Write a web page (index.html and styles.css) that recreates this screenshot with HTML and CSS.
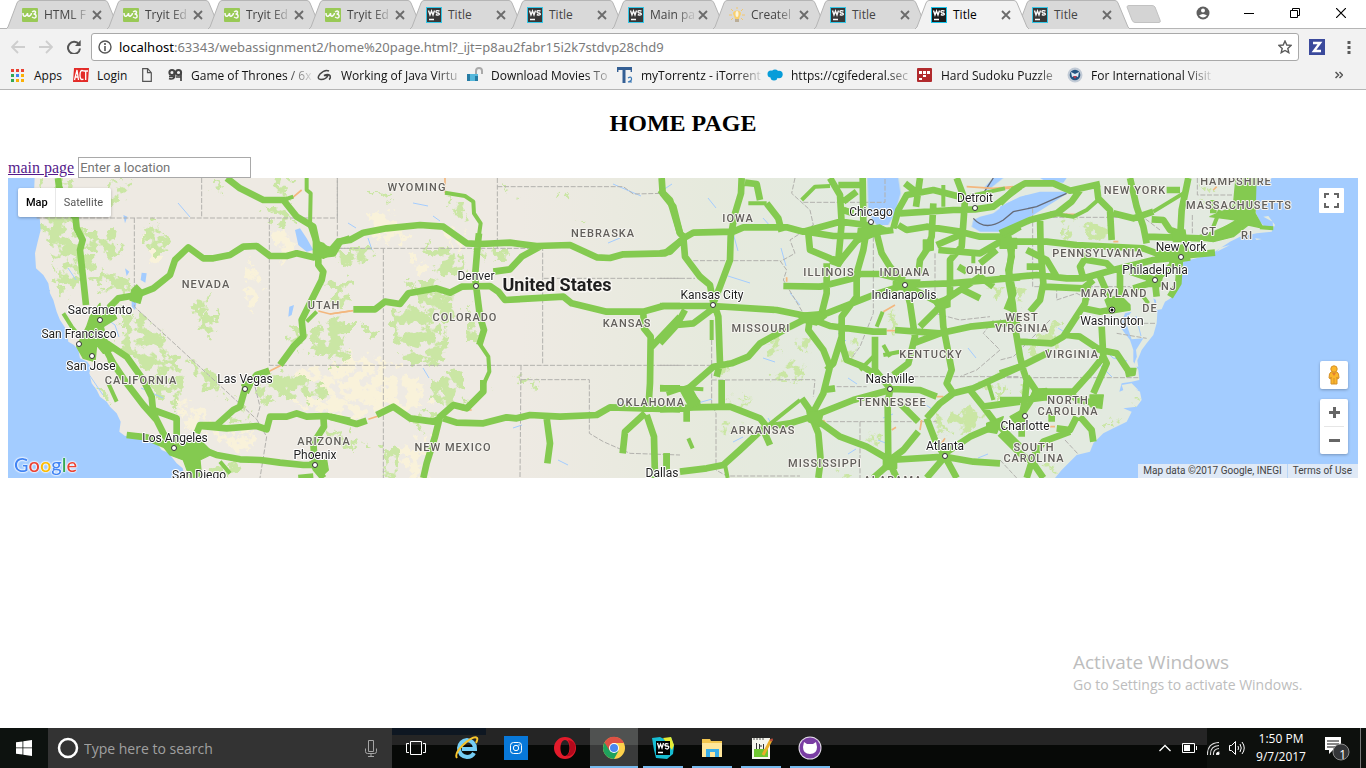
FILE: index.html
```html
<!DOCTYPE html>
<html lang="en">
<head>
<meta charset="utf-8">
<title>Title</title>
<link rel="stylesheet" href="styles.css">
</head>
<body>
<svg class="defs" aria-hidden="true">
  <symbol id="tab" viewBox="0 0 115 29"><path d="M0 29 2 27 11 3Q12 .5 14 .5H99Q101 .5 102 3L112 27 114 29" stroke="#b5b5b5"/></symbol>
  <symbol id="w3" viewBox="0 0 16 16"><rect width="16" height="14" y="1" rx="1" fill="#8fc740"/><path d="M1 6q0 4 2.500 3 2-1 2-3 0 4 2 3 2-1 2-3M10 5q3-2 3.500 0 0 2-2 2 3 0 2.500 3-1 2-4 0" fill="none" stroke="#fff" stroke-width="1.500"/></symbol>
  <symbol id="ws" viewBox="0 0 16 16"><rect width="16" height="16" fill="#18c4ea"/><rect x="1" y="1" width="14" height="14" fill="#1c1c1c"/><path d="M2.500 3.500 4 8l1.500-4L7 8l1.500-4.500M13.500 4Q10 3 10 4.600T12 6q2 1 1 1.800T9.800 7.500M3 12.500h5" fill="none" stroke="#fff" stroke-width="1.400"/></symbol>
  <symbol id="bulb" viewBox="0 0 16 16"><path d="M5 9Q3 6 5 4.500q3-2 6 0 2 2 0 4.500l-1 3H6z" fill="#ffcf5c"/><path d="M6 12h4v3H6z" fill="#b5a68c"/><path d="M8 0v2M2 2l2 2M14 2l-2 2M0 8h3M13 8h3M2 13l2-2M14 13l-2-2" stroke="#f8c55c"/><ellipse cx="8" cy="7" rx="1.500" ry="3" fill="#fff9df"/></symbol>
  <symbol id="x" viewBox="0 0 10 10"><path d="m1 1 8 8M9 1 1 9" stroke="#6b6b6b" stroke-width="1.800"/></symbol>
</svg>

<header class="browser">
  <div class="tabstrip">
    <div class="tabs">
      <div class="tab"><svg class="shape"><use href="#tab"/></svg><svg class="ico"><use href="#w3"/></svg><button class="name fade">HTML F</button><button class="close" aria-label="Close"><svg><use href="#x"/></svg></button></div>
      <div class="tab"><svg class="shape"><use href="#tab"/></svg><svg class="ico"><use href="#w3"/></svg><button class="name fade">Tryit Ed</button><button class="close" aria-label="Close"><svg><use href="#x"/></svg></button></div>
      <div class="tab"><svg class="shape"><use href="#tab"/></svg><svg class="ico"><use href="#w3"/></svg><button class="name fade">Tryit Ed</button><button class="close" aria-label="Close"><svg><use href="#x"/></svg></button></div>
      <div class="tab"><svg class="shape"><use href="#tab"/></svg><svg class="ico"><use href="#w3"/></svg><button class="name fade">Tryit Ed</button><button class="close" aria-label="Close"><svg><use href="#x"/></svg></button></div>
      <div class="tab"><svg class="shape"><use href="#tab"/></svg><svg class="ico"><use href="#ws"/></svg><button class="name">Title</button><button class="close" aria-label="Close"><svg><use href="#x"/></svg></button></div>
      <div class="tab"><svg class="shape"><use href="#tab"/></svg><svg class="ico"><use href="#ws"/></svg><button class="name">Title</button><button class="close" aria-label="Close"><svg><use href="#x"/></svg></button></div>
      <div class="tab"><svg class="shape"><use href="#tab"/></svg><svg class="ico"><use href="#ws"/></svg><button class="name fade">Main pa</button><button class="close" aria-label="Close"><svg><use href="#x"/></svg></button></div>
      <div class="tab"><svg class="shape"><use href="#tab"/></svg><svg class="ico"><use href="#bulb"/></svg><button class="name fade">Createl</button><button class="close" aria-label="Close"><svg><use href="#x"/></svg></button></div>
      <div class="tab"><svg class="shape"><use href="#tab"/></svg><svg class="ico"><use href="#ws"/></svg><button class="name">Title</button><button class="close" aria-label="Close"><svg><use href="#x"/></svg></button></div>
      <div class="tab active"><svg class="shape"><use href="#tab"/></svg><svg class="ico"><use href="#ws"/></svg><button class="name">Title</button><button class="close" aria-label="Close"><svg><use href="#x"/></svg></button></div>
      <div class="tab"><svg class="shape"><use href="#tab"/></svg><svg class="ico"><use href="#ws"/></svg><button class="name">Title</button><button class="close" aria-label="Close"><svg><use href="#x"/></svg></button></div>
      <button class="newtab" aria-label="New tab"><svg width="36" height="18" viewBox="0 0 36 18"><path d="M1 2Q1 .5 3 .5H26Q28 .5 29 2L34 15Q35 17.500 33 17.500H9Q7 17.500 6 15Z" fill="#d4d4d4" stroke="#c2c2c2"/></svg></button>
    </div>
    <div class="window-buttons">
      <button aria-label="Profile"><svg width="14" height="14" viewBox="0 0 14 14"><circle cx="7" cy="7" r="6.500" fill="#5f5f5f"/><circle cx="7" cy="4.500" r="2" fill="#fff"/><path d="M3 9.500q4-3 8 0-4 4-8 0" fill="#fff"/></svg></button>
      <button aria-label="Minimize"><svg width="10" height="10" viewBox="0 0 10 10"><path d="M0 5.500h10" stroke="#000"/></svg></button>
      <button aria-label="Restore"><svg width="10" height="10" viewBox="0 0 10 10"><path d="M.5 2.500h7v7h-7zM2.500 2.500v-2h7v7h-2" fill="none" stroke="#000"/></svg></button>
      <button aria-label="Close window"><svg width="10" height="10" viewBox="0 0 10 10"><path d="m0 0 10 10M10 0 0 10" stroke="#000" stroke-width="1.200"/></svg></button>
    </div>
  </div>

  <div class="toolbar">
    <button aria-label="Back"><svg width="14" height="14" viewBox="0 0 14 14"><path d="M14 7H1M7 1 1 7l6 6" fill="none" stroke="#cecece" stroke-width="1.800"/></svg></button>
    <button aria-label="Forward"><svg width="14" height="14" viewBox="0 0 14 14"><path d="M0 7h13M7 1l6 6-6 6" fill="none" stroke="#cecece" stroke-width="1.800"/></svg></button>
    <button aria-label="Reload"><svg width="14" height="14" viewBox="0 0 14 14"><path d="M12 4.500A6 6 0 1 0 13 8.500" fill="none" stroke="#555" stroke-width="2"/><path d="M13.700 0v6H8z" fill="#555"/></svg></button>
    <div class="omnibox">
      <svg width="14" height="14" viewBox="0 0 14 14"><circle cx="7" cy="7" r="6" fill="none" stroke="#555" stroke-width="1.400"/><path d="M7 3v2M7 6v5" stroke="#555" stroke-width="1.600"/></svg>
      <div class="url" role="textbox" aria-label="Address"><b>localhost</b>:63343/webassignment2/home%20page.html?_ijt=p8au2fabr15i2k7stdvp28chd9</div>
      <button aria-label="Bookmark"><svg width="14" height="14" viewBox="0 0 14 14"><path d="m7 1 1.800 4 4.200.400-3.200 3 1 4.300L7 10.500l-3.800 2.200 1-4.300L1 5.400 5.200 5z" fill="none" stroke="#5a5a5a" stroke-width="1.400"/></svg></button>
    </div>
    <button aria-label="Extension"><svg width="16" height="16" viewBox="0 0 16 16"><path fill="#3b4a9c" d="M0 0h16v16H0z"/><path d="M4 4h7L5 12h7" fill="none" stroke="#fff" stroke-width="2.400"/></svg></button>
    <button class="menu" aria-label="Menu"><svg width="4" height="14" viewBox="0 0 4 14"><path d="M.5 1h3v3h-3zM.5 6h3v3h-3zM.5 11h3v3h-3z" fill="#5a5a5a"/></svg></button>
  </div>

  <nav class="bookmarks">
    <a href="#" class="apps"><svg width="14" height="14" viewBox="0 0 14 14"><path d="M0 1h3v3H0zM5 1h3v3H5zM10 1h3v3h-3z" fill="#ea4335"/><path d="M0 6h3v3H0z" fill="#34a853"/><path d="M5 6h3v3H5z" fill="#4285f4"/><path d="M10 6h3v3h-3zM5 11h3v3H5zM10 11h3v3h-3z" fill="#fbb005"/><path d="M0 11h3v3H0z" fill="#34a853"/></svg><span>Apps</span></a>
    <a href="#" class="login"><svg width="16" height="16" viewBox="0 0 16 16"><path d="M1 1h15l-1 14H0z" fill="#e32b28"/><path d="m1.500 13 2.500-10 1.500 10M2.500 10h3M10.500 4Q7 2 7 8t3.500 4M10.500 4H15M12.700 4v9" fill="none" stroke="#fff" stroke-width="1.300"/></svg><span>Login</span></a>
    <a href="#" class="doc" aria-label="Page"><svg width="10" height="14" viewBox="0 0 10 14"><path d="M.7.700h5l3.600 4v8.600H.7zM5.500.700v4h4" fill="none" stroke="#555" stroke-width="1.200"/></svg></a>
    <a href="#" class="mark"><svg viewBox="0 0 16 16"><circle cx="5" cy="5.500" r="2.600" fill="none" stroke="#444" stroke-width="2"/><circle cx="11.500" cy="5.500" r="2.600" fill="none" stroke="#444" stroke-width="2"/><path d="M7.500 5v5Q6 13 2 11.500M2 9.500h5M14 5v9M9 10h5" fill="none" stroke="#444" stroke-width="1.700"/></svg><span>Game of Thrones / 6x</span></a>
    <a href="#" class="mark"><svg viewBox="0 0 16 16"><path d="M12 4Q8 2 3 7-1 12 4 12.500q5 0 7-4H7q4-2 6 0 1 3-1 4" fill="none" stroke="#444" stroke-width="1.500"/></svg><span>Working of Java Virtu</span></a>
    <a href="#" class="mark"><svg viewBox="0 0 16 16"><path d="M9 7V4q0-3 3-3t3 3v3" fill="none" stroke="#aaa" stroke-width="2"/><path d="M0 7h11v7H0z" fill="#55b8dc"/><path d="M0 7h3v7H0zM8 9h3v5H8z" fill="#267ca4"/></svg><span>Download Movies To</span></a>
    <a href="#" class="mark"><svg viewBox="0 0 16 16"><path d="M0 1.500h15M7 1.500V16" fill="none" stroke="#345f94" stroke-width="3"/><path d="M.7 1v4M14.300 1v4" stroke="#345f94" stroke-width="1.400"/><path d="M11 11q3-2 3.500.500T11 15h4" fill="none" stroke="#3c79b5" stroke-width="1.200"/></svg><span>myTorrentz - iTorrent</span></a>
    <a href="#" class="mark"><svg viewBox="0 0 16 16"><g fill="#079dd9"><circle cx="4" cy="7" r="3.500"/><circle cx="8" cy="6" r="3.500"/><circle cx="12" cy="7.500" r="3.700"/><circle cx="7" cy="10" r="3.500"/></g></svg><span>https://cgifederal.sec</span></a>
    <a href="#" class="mark"><svg viewBox="0 0 16 16"><rect y="1" width="15" height="14" rx="1" fill="#b12a2d"/><path d="M2 4h3v3H2zM6 4h3v3H6zM10 4h3v3h-3zM6 8h3v2H6zM2 11h3v2H2z" fill="#fff"/></svg><span>Hard Sudoku Puzzle</span></a>
    <a href="#" class="mark"><svg viewBox="0 0 16 16"><circle cx="8" cy="8" r="7.500" fill="#c2cbd6"/><circle cx="8" cy="8" r="5.300" fill="#245482"/><path d="M4 5l4 2 4-2-1 5-3-1-3 1z" fill="#dce9f4"/><path d="m6 9 2 3 2-3z" fill="#b33b50"/></svg><span>For International Visit</span></a>
    <button class="more" aria-label="More bookmarks"><svg width="8" height="8" viewBox="0 0 8 8"><path d="m.5 1 3 3-3 3M4.500 1l3 3-3 3" fill="none" stroke="#555" stroke-width="1.500"/></svg></button>
  </nav>
</header>

<main class="page">
  <h2>HOME PAGE</h2>
  <div class="line"><a href="#">main page</a> <input type="text" aria-label="Location" placeholder="Enter a location"></div>
  <section class="map" aria-label="Map">
    <svg class="canvas" viewBox="0 0 1350 300" preserveAspectRatio="xMidYMid slice">
      <defs>
        <linearGradient id="land"><stop offset="0" stop-color="#eeeae3"/><stop offset=".38" stop-color="#eeeae3"/><stop offset=".52" stop-color="#e6eadd"/><stop offset=".62" stop-color="#e3eae0"/><stop offset="1" stop-color="#e3eae0"/></linearGradient>
        <filter id="rough" x="-5%" y="-5%" width="110%" height="110%" color-interpolation-filters="sRGB"><feTurbulence type="fractalNoise" baseFrequency=".09" numOctaves="4" seed="4" result="n"/><feDisplacementMap in="SourceGraphic" in2="n" scale="24" xChannelSelector="R" yChannelSelector="G" result="d"/><feColorMatrix in="n" values="0 0 0 0 0 0 0 0 0 0 0 0 0 0 0 0 0 14 0 -5.800"/><feComposite in="d" operator="in"/></filter>
      </defs>
      <rect width="1350" height="300" fill="url(#land)"/>

      <g filter="url(#rough)">
        <g transform="translate(-8 -28) scale(.33333)">
          <path class="yellow" d="M810 250 860 230 900 300 840 350ZM850 700 930 650 1050 640V800L960 790 880 760ZM530 730 600 770 660 850 560 850ZM760 330 790 420 750 500 735 420ZM430 260 470 250 490 330 450 340ZM640 850 760 850 780 880 720 910Z"/>
          <path class="green" d="M120 90 210 90 230 230 240 360 215 430 190 440 160 350 135 250ZM230 240 320 240 370 310 320 320 270 290ZM250 350 330 370 400 390 405 430 350 440 280 390ZM350 470 430 500 500 560 550 670 535 790 480 750 430 660 370 600 360 520ZM430 210 480 230 510 300 440 310ZM340 90 390 90 370 150 310 160ZM640 430 610 510 570 500 590 450ZM665 475 650 540 610 550 620 490ZM560 610 640 670 690 740 610 730ZM830 90 880 90 860 150 830 130ZM800 670 900 680 980 710 950 750 850 740 770 760ZM960 500 1050 510V620H930L940 560ZM1000 400 1050 390V470L990 460ZM680 800 760 770 750 820 690 820ZM980 850 1050 830V900L980 870ZM280 700 340 750 330 780ZM640 100 670 90 660 130 630 130ZM790 170 850 170 900 230 830 220ZM235 300 280 320 300 360 240 350ZM880 520 920 560 890 610 870 580ZM660 940 720 950 700 980 640 970Z"/>
        </g>
        <g transform="translate(322 -8) scale(.33333)">
          <path class="yellow" d="M100 130 200 130 230 210 140 220ZM30 480 70 560 150 560 270 620 300 690 230 730 160 710 80 750 0 700V490ZM200 850 290 790 300 924H250ZM240 240 290 290 250 330ZM340 170 400 200 380 250Z"/>
          <path class="green" d="M10 240 130 240 140 270 60 280 20 275ZM280 210 330 240 400 250 410 310 310 310 330 280 280 240ZM225 330 300 330 390 400 390 450 310 450 250 370ZM180 430 260 400 330 470 350 560 300 590 230 570 190 510ZM0 460 60 500 50 570 0 590ZM90 460 160 480 130 510ZM310 630 400 600 410 700 350 720 300 690ZM160 830 230 850 200 920H165ZM340 80 410 110 420 160 360 110ZM450 240 530 240V270H455ZM560 620 630 630 630 645 570 645ZM510 50 570 80 540 90ZM120 70 160 60 180 90ZM690 70 720 75 710 90ZM740 150 770 155 760 165ZM250 730 310 730 300 780 240 770ZM10 760 100 820 60 830ZM360 640 400 610 400 690 360 690ZM480 655 500 665 480 675ZM420 400 450 500 420 510Z"/>
        </g>
        <g transform="translate(652 -8) scale(.33333)">
          <path class="green" d="M310 520 360 500 350 550ZM400 520 460 510 450 550ZM160 600 210 580 190 630ZM340 600 430 580 430 620 350 630ZM170 770 240 750 230 790ZM200 690 280 690 250 700ZM540 530 600 520 570 580ZM830 750 930 700 980 740 900 800 820 780ZM960 650 1010 620 1000 700ZM980 350 1030 350 1010 400ZM680 450 710 430 700 490ZM520 890 590 900 560 924ZM630 790 670 800 650 840Z"/>
        </g>
        <g transform="translate(992 -8) scale(.33333)">
          <path class="green" d="M180 150 220 150 210 200 175 190ZM250 170 330 160 340 210 270 210ZM40 350 75 350 55 400ZM110 510 170 440 190 460 150 540 80 580ZM0 650 30 640 0 700ZM60 650 100 610 90 680ZM330 750 370 750 330 780ZM130 880 180 900 150 920ZM400 680 425 680 410 705ZM600 50 650 60 610 90Z"/>
        </g>
      </g>
      <g class="water">
        <path transform="translate(-8 -28) scale(.33333)" d="M24 84H104L102 130 112 150 118 190 122 240 112 280 105 310 108 355 130 375 145 400 150 430 160 450 170 485 180 510 200 540 205 575 222 585 235 600 240 625 262 635 272 650 268 670 275 700 290 720 300 740 320 755 330 770 350 790 362 815 358 845 375 858 400 855 430 860 450 875 470 880 485 900 505 908 530 940 548 955 555 984H24ZM885 240 900 235 920 265 940 300 920 305 895 285ZM425 368 440 370 436 398 422 390ZM395 450 410 455 405 480 395 470ZM868 470 882 465 875 495 865 500ZM370 195 382 200 375 220ZM375 355 388 365 380 378Z"/>
        <path transform="translate(652 -8) scale(.33333)" d="M622 24H715L722 70 705 130 685 165 650 165 625 130ZM940 150 960 140 1000 130 1040 100 1100 75V150L1020 185 960 185 935 170ZM1000 24H1030L985 60 970 55Z"/>
        <path transform="translate(992 -8) scale(.33333)" d="M0 110 60 80 120 65 200 65 195 75 100 135 0 180ZM120 24H200L190 38 140 35ZM775 24 765 60 768 130 780 155 795 172 820 175 818 155 790 140 805 138 825 165 815 185 770 190 720 200 690 215 640 248 600 262 550 275 545 310 530 355 512 385 495 395 485 418 470 420 468 390 460 385 472 430 470 460 460 495 440 520 425 540 412 572 408 540 430 505 395 508 375 450 395 425 375 430 360 470 390 510 400 540 400 575 415 600 418 630 395 635 365 640 358 665 395 650 420 665 425 690 410 710 370 715 395 725 380 755 340 775 310 790 280 820 270 845 230 855 200 885 185 900 165 924H1074V24Z"/>
      </g>
      <path transform="translate(992 -8) scale(.33333)" d="m365 645 30-5 20 20-30-5-10 20zM370 690l45-5-10 15zM650 245l40-20-30 8zM765 205l20 2-15 3zM400 590l10-30 5 30z" fill="#e3eae0"/>

      <!-- streams and ponds -->
      <g class="stream">
        <path d="M70 20l6 10M60 90l8 12M340 45l8 5M100 142l7 5 4 12M360 60l4 12M405 25l15 3M425 38l7 5M605 6l28 12M600 65l12-5M655 12l9-6M725 55l5 18M700 20l8 10M755 40l8 9M720 98l22 7M773 70l5 18M782 115l10 12M760 240l7 12M725 264l10-5M550 282l10 5M605 228l20-8M840 200l9 6M830 155l8 8M905 165l5 12M915 225l12 8M875 240l10-4M960 170l8 10M970 280l10-4M1005 188l10 5M1030 220l14-4M1090 185l14 14M1095 170l10 10 14 3M1128 138l5 20M840 276l8-5M870 262l10 4M1050 150l8 5M690 225l14-4M755 180l12 4M80 195l15 22M133 210l22 10M30 105l12 8M170 25l12 14M290 65l8-3M415 190l6 10M505 250l9-3"/>
      </g>

      <g class="border">
        <path transform="translate(-8 -28) scale(.33333)" d="M110 204H1012V84M605 84V204M403 204V470L770 808M808 204V646H1050M1012 295H1050M765 710 780 770 770 808 800 860 780 984"/>
        <path transform="translate(322 -8) scale(.33333)" d="M22 24V235H638V325H1050M160 235V924M502 24V235M502 50H880L910 72 1000 70M638 325V586M0 586H1050M573 586 570 924M573 629H778V790L820 815 900 850 1050 855"/>
        <path transform="translate(652 -8) scale(.33333)" d="M0 325H105M100 272H360L380 300 370 330 430 430M430 97H675V24M0 586H155M155 630 465 629 460 680M155 450V700L168 730V900L200 918H420M640 180V430L600 530 570 570M825 250V430M480 755H830M640 620H1080M405 24 395 70 450 120 460 165 390 210 405 250 360 275M825 430 900 450 990 440M600 755V924M1000 450 970 490 1020 540 950 600 900 620M510 650H620"/>
        <path transform="translate(992 -8) scale(.33333)" d="M98 115V350H390L400 360M0 623H418M98 142H430L480 180M592 24V75H700M577 135V205M170 350V390L230 370 270 390M150 450 40 560 0 570M350 490 440 505M430 460H470M195 810 235 853M0 870 50 924M0 448 45 490"/>
      </g>
      <path transform="translate(652 -8) scale(.33333)" d="M940 145Q975 185 1030 150L1060 125 1130 110 1220 70M970 70 1000 24" fill="none" stroke="#666b78" stroke-width="4"/>

      <g class="slow">
        <path transform="translate(-8 -28) scale(.33333)" d="M805 665 845 645M875 145 905 120M955 483 990 492 1050 483"/>
        <path transform="translate(322 -8) scale(.33333)" d="M115 748 145 738M0 432 70 422M345 24V68M395 720H425"/>
        <path transform="translate(652 -8) scale(.33333)" d="M670 425 705 405M680 482H710M920 50 1000 55 1060 50M780 780 785 750M830 680H850M380 322V335M845 820 855 805M695 780 708 772M490 750 500 765"/>
        <path transform="translate(992 -8) scale(.33333)" d="M185 133H225M340 215H355M640 60 650 50M0 55H30M145 770H165M38 450 45 462"/>
      </g>

      <g class="roads">
        <g transform="translate(-8 -28) scale(.33333)">
          <path d="M174 84 177 110 200 170 227 205 230 235 248 270 240 300 250 390 258 465M300 530 330 470 355 445 410 435 460 415 510 375 525 330 565 292 610 325 640 325 690 315 730 290 770 288 810 318 860 318 890 310 940 322 960 315 1000 310 1020 275 1050 265M320 580 380 620 430 690 455 740 460 790 490 850 520 895M310 585 340 640 380 700 430 765 470 810 495 860M460 780 530 805V880M380 855 440 862 520 895 600 895 650 915 720 928 780 930 840 938 910 945H945M520 895 570 930 600 984M590 850 600 825 650 825 700 780 720 770 735 717 770 675 808 662M600 828 680 835 770 828 800 838 810 800 860 800 890 790 920 800 980 798 1050 812M970 798 972 830 940 880 945 945 970 984M840 645 880 590 910 560 905 510 945 430 965 390 970 365 955 345V300L940 230 890 200 850 150H790L720 115 680 84M955 290 990 300M895 984 940 980"/>
          <path class="thin" d="M190 490 215 530 240 560M325 700 350 755M660 935 690 970M850 150 880 140M920 84 920 120 932 130 930 230 950 290M920 515 950 485M325 600 330 640"/>
          <path class="fill" d="M230 590 260 530 270 500 300 460 300 500 345 495 350 505 310 530 320 570 345 600 310 610 290 585 285 635 250 625ZM395 420 410 405 430 425 420 460 390 450ZM490 890 600 870 640 910 600 930 605 984H570L550 930 510 915ZM725 705 745 690 775 665 765 690 745 730ZM930 935 980 930 985 960 960 984 940 960ZM940 270 970 280 1000 310 970 325 940 315Z"/>
        </g>
        <g transform="translate(322 -8) scale(.33333)">
          <path d="M-5 250 25 215 60 210 100 188 170 175 270 165 340 170 410 220 450 222 540 218 620 228 720 225 800 262 840 264 880 253 1005 250 1055 210M447 190 443 225 435 320 438 345 450 440 462 480 448 525M460 630V665L410 715 370 705 330 740 315 800 290 880 280 924M490 305 540 298 575 260 630 230M70 418 135 418 165 395 210 402 235 370 320 355 360 368 395 350 480 348 505 365 525 390 700 380 725 400 830 425 940 425 1000 408H1050M940 430 942 475 962 500 960 640 955 715M965 530 1050 440M0 740 80 762 110 752M140 735 190 710 240 745 310 755 330 745M340 745 380 758 460 760 530 742 560 745 600 735 690 740 800 735 840 712 940 715 1050 718M650 745 660 820 652 880M945 730 885 785 878 850M950 735 972 800 975 924M1010 850V900M995 24 998 70 1030 110 1050 190M990 655 1050 655"/>
          <path class="thin" d="M345 68 405 78 430 95 432 130 452 160 447 195M448 520 475 560 478 605 462 640"/>
        </g>
        <g transform="translate(652 -8) scale(.33333)">
          <path d="M0 60 30 90 60 190 70 200 75 260 120 320 150 345 160 400M0 250 30 245 70 205 100 188 220 185 250 172 380 172 430 185 540 155 620 165 660 185 700 180M245 24 243 70 225 130 212 200 210 270 180 350 160 400M255 38 290 42 300 90M320 100 355 145 365 185M510 24 540 75 545 160 535 270M535 45H610M608 24 610 160M550 95 590 65M550 120 580 130M440 185 520 198 610 198M445 190 450 240 510 265 535 280 600 200M620 180 610 240 590 310V380L545 440V520L560 570 610 590 640 610M0 408H160L350 420 450 440 500 430 640 375 735 345 870 340 1080 322M500 280V370L485 430M370 348 480 350 580 325 600 312 660 312 735 330M450 445 510 468 640 485 680 485M705 480 840 490 930 470 1080 455M450 445 445 480 490 540 510 590 490 670 455 735M545 500 520 580 500 600M450 440 390 470 300 520 265 560 215 580 160 590 80 660M165 410 175 440 180 580 170 620M185 630V705M0 520 50 465 100 460 160 415M50 465 75 420M0 718 100 712 210 710 300 745 320 770 390 760 455 740 580 690 690 660M310 775 240 840 190 885 140 895 60 905M455 740 475 790 482 870 475 924M470 750 540 800 620 830 690 870 855 860 940 875 1020 880M690 660 683 700 685 880M640 924 690 880 710 924M690 870 730 840 775 785M720 700 775 755M690 657 780 660 830 680M800 745 840 700 880 670 940 655 1080 590M800 745 825 810 855 860M800 924 855 860 890 924M855 850 930 800 1000 770M735 345 750 400 765 500 745 580 700 615M650 190 665 250 690 290 735 345 840 400M850 400 780 470M845 395 850 470 875 600 860 640 880 670M760 520 840 490M645 500V600L690 655M715 165 740 180 800 170 900 185 960 200 1030 200 1080 170M720 130 880 120 945 118 1000 110 1080 50M700 175 715 120 740 75 820 60 900 80M735 40 780 75M780 24 768 110M820 100 815 200 800 240 780 270 775 310M890 24 915 90 905 230 870 270V380L845 400M830 225 900 195M835 240 960 250 1030 210M895 290 920 305M960 280 1010 240M870 380 960 320 1000 350M910 360 960 385M1045 200 1055 260 1045 300 1060 370 1040 420M930 660 970 710 1000 750 1080 830M970 710 1080 695M80 660 115 700M80 710V755M425 685 460 735M310 780 330 825M490 660 525 655M20 850V900"/>
          <path class="thin" d="M425 90 465 50 510 48M155 450V510M320 770 420 690M85 805 98 835M195 885 203 924M650 470 668 425M670 555 720 545M670 525 690 560M850 45V110M920 80 1035 55M940 240V280M985 640 1000 690M640 560 600 600M265 100H320M0 650 130 658M20 672 100 645"/>
          <path class="fill" d="M595 175 660 165 690 180 640 200 590 220ZM415 430 480 425 500 440 470 465 420 455ZM820 395 870 375 870 410 835 420ZM790 210 820 210 820 240 790 245ZM520 260 555 265 540 290 510 280ZM700 335 735 330 780 330 760 365 700 355ZM440 720 490 725 480 770 445 755ZM670 865 710 860 710 895 670 900ZM60 660 90 645 120 700 90 715ZM980 760 1030 740 1010 790 980 785Z"/>
        </g>
        <g transform="translate(992 -8) scale(.33333)">
          <path d="M0 100 40 60 75 40 160 40 210 62 300 42M0 190 90 150 170 130 215 95 240 60M290 45 295 85 330 120 335 210M390 24 410 110 430 170 440 220M340 130 400 145 460 125M500 60H540M565 24 545 120 540 210M455 148 490 150 510 180 540 190M440 200 600 205 650 190 740 150M30 215H140L230 225 430 235 470 250 540 258 645 248M0 325 110 315 200 325 250 325 340 300 460 270 540 262M120 140 122 240 130 340 120 390 90 425M20 200 35 240 25 330 38 400 45 470 60 560 70 600M80 240 140 270 170 320M80 290H130M250 325 240 290 265 250M130 350 250 355 280 330M265 340 255 400 190 500 155 520 60 515M300 320 340 410M360 300V400M250 415 300 425 390 410M390 305 465 330 540 265 535 340 510 380M400 355 465 335 470 380M260 270 320 280 340 300M305 470 310 560 320 580 280 670M200 495 240 500 300 540 350 550 390 610M310 560 270 610 220 665H110M0 610 60 590 150 545M70 600 80 630 75 690 65 740V800M0 690H75L150 680M80 620 110 665 60 740M200 665 235 690 290 700M230 740 210 780 170 775M240 740 275 780 280 815M210 785 130 815 100 860 80 924M0 790 60 850 100 880 130 924M155 730V755M640 90V130"/>
          <path class="thin" d="M300 85 260 120 220 140 150 130M780 172 820 175M460 125 550 70M640 170 660 120M430 380 445 400"/>
          <path class="fill" d="M708 24H768L765 130 790 175 745 165 700 200 640 215 560 205 650 185 710 150 630 140 700 110ZM0 205 50 205 50 235 0 235ZM315 390 360 375 390 405 390 420 330 430ZM440 330 490 310 480 350 440 350ZM500 240 560 220 570 270 510 280ZM270 675 310 675 305 715 270 710ZM100 660 140 655 150 690 90 685ZM520 180 555 180 560 215 520 215ZM30 740 65 720 75 750 60 780ZM375 595 408 595 405 615 380 620Z"/>
        </g>
      </g>

      <g class="labels" transform="translate(-8 -178)">
        <g class="state">
          <text x="417" y="191">WYOMING</text><text x="206" y="288">NEVADA</text><text x="324" y="309">UTAH</text><text x="141" y="384">CALIFORNIA</text><text x="324" y="445">ARIZONA</text><text x="465" y="321">COLORADO</text><text x="453" y="451">NEW MEXICO</text><text x="603" y="237">NEBRASKA</text><text x="627" y="327">KANSAS</text><text x="651" y="406">OKLAHOMA</text><text x="738" y="222">IOWA</text><text x="761" y="332">MISSOURI</text><text x="763" y="434">ARKANSAS</text><text x="829" y="276">ILLINOIS</text><text x="905" y="276">INDIANA</text><text x="981" y="274">OHIO</text><text x="931" y="358">KENTUCKY</text><text x="892" y="406">TENNESSEE</text><text x="825" y="467">MISSISSIPPI</text><text x="893" y="484">ALABAMA</text><text x="1135" y="194">NEW YORK</text><text x="1239" y="209">MASSACHUSETTS</text><text x="1236" y="185">HAMPSHIRE</text><text x="1209" y="235">CT</text><text x="1247" y="239">RI</text><text x="1098" y="257">PENNSYLVANIA</text><text x="1114" y="297">MARYLAND</text><text x="1150" y="312">DE</text><text x="1169" y="290">NJ</text><text x="1022" y="321">WEST</text><text x="1022" y="332">VIRGINIA</text><text x="1072" y="358">VIRGINIA</text><text x="1068" y="404">NORTH</text><text x="1068" y="415">CAROLINA</text><text x="1034" y="451">SOUTH</text><text x="1034" y="462">CAROLINA</text>
        </g>
        <g class="dots"><circle cx="100" cy="320" r="2.500"/><circle cx="79" cy="344" r="2.500"/><circle cx="92" cy="356" r="2.500"/><circle cx="245" cy="389" r="2.500"/><circle cx="174" cy="448" r="2.500"/><circle cx="315" cy="465" r="2.500"/><circle cx="476" cy="286" r="2.500"/><circle cx="713" cy="305" r="2.500"/><circle cx="871" cy="222" r="2.500"/><circle cx="975" cy="208" r="2.500"/><circle cx="905" cy="285" r="2.500"/><circle cx="890" cy="389" r="2.500"/><circle cx="945" cy="456" r="2.500"/><circle cx="1025" cy="416" r="2.500"/><circle cx="1181" cy="257" r="2.500"/><circle cx="1155" cy="280" r="2.500"/><circle cx="1112" cy="310" r="3"/></g>
        <circle cx="1112" cy="310" r="1.500"/>
        <g class="city">
          <text x="100" y="314">Sacramento</text><text x="79" y="338">San Francisco</text><text x="91" y="370">San Jose</text><text x="245" y="383">Las Vegas</text><text x="175" y="442">Los Angeles</text><text x="315" y="459">Phoenix</text><text x="199" y="479">San Diego</text><text x="476" y="280">Denver</text><text x="712" y="299">Kansas City</text><text x="662" y="477">Dallas</text><text x="871" y="216">Chicago</text><text x="975" y="202">Detroit</text><text x="904" y="299">Indianapolis</text><text x="890" y="383">Nashville</text><text x="945" y="450">Atlanta</text><text x="1025" y="430">Charlotte</text><text x="1181" y="251">New York</text><text x="1155" y="274">Philadelphia</text><text x="1112" y="325">Washington</text>
        </g>
        <text class="country" x="557" y="291">United States</text>
      </g>
    </svg>
    <div class="maptype"><button class="on">Map</button><button>Satellite</button></div>
    <div class="google" aria-label="Google"><i class="b">G</i><i class="r">o</i><i class="y">o</i><i class="b">g</i><i class="g">l</i><i class="r">e</i></div>
    <button class="full" aria-label="Fullscreen"><svg width="15" height="15" viewBox="0 0 15 15"><path d="M1 5V1h4M10 1h4v4M14 10v4h-4M5 14H1v-4" fill="none" stroke="#666" stroke-width="2"/></svg></button>
    <div class="controls">
      <button class="peg" aria-label="Street View"><svg width="12" height="20" viewBox="0 0 12 20"><path d="M3 7h6q2 1 2 6l-1.500 1L9 12v7H3v-7l-.5 2L1 13Q1 8 3 7" fill="#fbb62b" stroke="#d5912a"/><circle cx="6" cy="4" r="3.200" fill="#fbb62b" stroke="#d5912a"/><path d="m4 8 2 3 2-3z" fill="#e48030"/><path d="M6 13v6" stroke="#d5912a"/></svg></button>
      <div class="zoom"><button aria-label="Zoom in"><svg width="11" height="11" viewBox="0 0 11 11"><path d="M0 5.500h11M5.500 0v11" stroke="#666" stroke-width="3"/></svg></button><button aria-label="Zoom out"><svg width="11" height="11" viewBox="0 0 11 11"><path d="M0 5.500h11" stroke="#666" stroke-width="3"/></svg></button></div>
    </div>
    <div class="legal"><span>Map data ©2017 Google, INEGI</span><a href="#">Terms of Use</a></div>
  </section>
  <aside class="watermark"><p>Activate Windows</p><small>Go to Settings to activate Windows.</small></aside>
</main>

<footer class="taskbar">
  <button class="start" aria-label="Start"><svg width="16" height="16" viewBox="0 0 16 16"><path d="m0 2.300 6.500-.9v6H0zM7.300 1.300 16 0v7.400H7.300zM0 8.200h6.500v6.300L0 13.700zM7.300 8.200H16V16l-8.700-1.300z" fill="#fff"/></svg></button>
  <div class="search"><svg width="22" height="22" viewBox="0 0 22 22"><circle cx="11" cy="11" r="9" fill="none" stroke="#fff" stroke-width="2.500"/></svg><input type="text" aria-label="Search" placeholder="Type here to search"><svg width="12" height="17" viewBox="0 0 12 17"><path d="M3.500.500h5v11h-5zM.5 8.500v3q0 2 2 2h7q2 0 2-2v-3M6 13.500v3M3 16.500h6" fill="none" stroke="#a5a5a5"/></svg></div>
  <div class="dock">
    <button class="view" aria-label="Task view"><svg width="20" height="14" viewBox="0 0 20 14"><path d="M4.500.500h11v13h-11zM3 2.500H.5v9H3M17 2.500h2.500v9H17" fill="none" stroke="#fff"/></svg></button>
    <button aria-label="Internet Explorer"><svg width="24" height="24" viewBox="0 0 24 24"><path d="M19 17q-2 4-7 4-8-1-8-9 1-7 8-8 8 1 8 9H7" fill="none" stroke="#75cdf4" stroke-width="4"/><path d="M2 22Q-1 18 8 9 19-1 22 2q1 1-1 5" fill="none" stroke="#f7c52d" stroke-width="2"/></svg></button>
    <button aria-label="Instagram"><svg width="24" height="24" viewBox="0 0 24 24"><path fill="#0878d9" d="M0 0h24v24H0z"/><rect x="6.500" y="6.500" width="11" height="11" rx="3" fill="none" stroke="#fff"/><circle cx="12" cy="12" r="2.700" fill="none" stroke="#fff"/><circle cx="15" cy="9" r=".7" fill="#fff"/></svg></button>
    <button aria-label="Opera"><svg width="24" height="24" viewBox="0 0 24 24"><path fill-rule="evenodd" fill="#e31b2b" d="M12 1a11 11 0 1 0 0 22 11 11 0 0 0 0-22m0 3c6 0 6 16 0 16s-6-16 0-16"/><path d="M15 4q9 1 7 10-2 7-9 6 5-3 4-9 0-4-2-7" fill="#b3081b"/></svg></button>
    <button class="open current" aria-label="Chrome"><svg width="24" height="24" viewBox="0 0 24 24"><circle cx="12" cy="12" r="11" fill="#fdd04b"/><path d="M12 12 2.500 6.500A11 11 0 0 0 12 23l4.500-8z" fill="#1fa15d"/><path d="M2.500 6.500A11 11 0 0 1 22 7H12l-4.500 7.500z" fill="#dd5144"/><circle cx="12" cy="12" r="5" fill="#fff"/><circle cx="12" cy="12" r="4" fill="#4a87ee"/></svg></button>
    <button class="open" aria-label="WebStorm"><svg width="24" height="24" viewBox="0 0 24 24"><path d="m1 2 8-1 6 3 5-3 3 9-1 8-6 5-11-1-2-8z" fill="#16bdd3"/><path d="m12 2 8-1 3 8-2 5" fill="#e6ec36"/><path d="M5 5h14v14H5z"/><path d="m6.500 7 1.500 5 1.500-4 1.500 4L12.500 7M17.500 8q-3-1-3.500.500t2 1.500 1.500 2-3.500 0M7 16.500h5" fill="none" stroke="#fff" stroke-width="1.300"/></svg></button>
    <button class="open" aria-label="File Explorer"><svg width="24" height="24" viewBox="0 0 24 24"><path d="M2 3h8l1 2h11v16H2z" fill="#f3c650"/><path d="M2 7h20v14H2z" fill="#ffe69a"/><path d="M6 13h13v8h-4v-5h-5v5H6z" fill="#3aaee9"/></svg></button>
    <button class="open" aria-label="Editor"><svg width="24" height="24" viewBox="0 0 24 24"><path d="M3 2h18v21H3z" fill="#f5f5ed"/><path d="M5 13h14v8H5z" fill="#6ec630"/><path d="M5 2v2M8 2v2M11 2v2M14 2v2" stroke="#555"/><path d="M7.500 7v6M10.500 8v5M10 10h3M14.500 8v5" stroke="#333"/><path d="m22 4-8 15" stroke="#eaae29" stroke-width="3"/><path d="m22 3 1 2" stroke="#b84d3b" stroke-width="3"/></svg></button>
    <button class="open" aria-label="GitHub"><svg width="24" height="24" viewBox="0 0 24 24"><circle cx="12" cy="12" r="11.500" fill="#e3dce9"/><circle cx="12" cy="12" r="10.500" fill="#7a3da3"/><path d="m6 6 3 2h6l3-2 1 5q0 7-7 7t-7-7z" fill="#fff"/></svg></button>
  </div>
  <div class="tray">
    <button aria-label="Show hidden icons"><svg width="12" height="8" viewBox="0 0 12 8"><path d="m.5 7 5.500-5.500L11.500 7" fill="none" stroke="#fff" stroke-width="1.300"/></svg></button>
    <button aria-label="Battery"><svg width="15" height="10" viewBox="0 0 15 10"><path d="M.5.500h12v9H.5zM14.500 3v4" fill="none" stroke="#fff"/><path d="M2 2h6v6H2z" fill="#fff"/></svg></button>
    <button aria-label="Network"><svg width="13" height="13" viewBox="0 0 13 13"><path d="M.5 13Q0 1 12 .500M3.500 13Q3 4 12 3.500M6.500 13Q6 7 12 6.500M9.500 13q0-3 3-3" fill="none" stroke="#ddd" stroke-width="1.100"/><circle cx="11" cy="11.500" r="1.500" fill="#fff"/></svg></button>
    <button aria-label="Volume"><svg width="17" height="14" viewBox="0 0 17 14"><path d="M.5 4.500h2l4-4v13l-4-4h-2zM9 5q1 2 0 4M11 3q2.500 4 0 8M13 1q4.500 6 0 12" fill="none" stroke="#fff"/></svg></button>
    <time>1:50 PM<br>9/7/2017</time>
    <button class="notify" aria-label="Notifications"><svg width="26" height="28" viewBox="0 0 26 28"><path d="M1 3h16v13H9l-4 4v-4H1z" fill="#fff"/><path d="M3 7h12M3 10h12M3 13h8" stroke="#111"/><circle cx="17" cy="18" r="8" fill="#343638" stroke="#8b8b8b"/></svg><b>1</b></button>
  </div>
</footer>
</body>
</html>
```
FILE: styles.css
```css
* { box-sizing: border-box; }
body { margin: 0; min-height: 100vh; display: flex; flex-direction: column; background: #fff; font-family: "Open Sans", "Noto Sans", sans-serif; font-size: 12px; }
button { border: 0; padding: 0; margin: 0; background: none; font: inherit; color: inherit; display: flex; align-items: center; justify-content: center; }
svg { display: block; flex: none; }
.defs { position: absolute; width: 0; height: 0; }

.browser { background: #f2f2f2; border-bottom: 1px solid #b5b5b5; }
.tabstrip { height: 29px; display: flex; justify-content: space-between; background: #fff; border-bottom: 1px solid #b5b5b5; }
.tabs { display: flex; padding-left: 6px; }
.tab { position: relative; width: 101px; height: 29px; padding-left: 16px; display: flex; align-items: center; color: #444; }
.shape { position: absolute; left: 0; top: 0; width: 115px; height: 29px; fill: #d9d9d9; }
.ico { position: relative; width: 16px; height: 16px; opacity: .85; }
.name { position: relative; width: 48px; margin-left: 6px; justify-content: flex-start; white-space: nowrap; }
.fade { -webkit-mask-image: linear-gradient(90deg, #000 55%, #0003 88%); mask-image: linear-gradient(90deg, #000 55%, #0003 88%); }
.close { position: relative; width: 10px; height: 10px; }
.close svg { width: 10px; height: 10px; }
.active { z-index: 1; color: #000; }
.active .shape { fill: #f2f2f2; }
.active .ico { opacity: 1; }
.newtab { align-self: center; margin-left: 9px; }
.window-buttons { display: flex; padding-right: 2px; height: 26px; }
.window-buttons button { width: 46px; }

.toolbar { height: 36px; padding: 4px 15px 4px 11px; display: flex; align-items: center; gap: 14px; }
.omnibox { flex: 1; height: 28px; margin: 0 -4px; padding: 0 6px; display: flex; align-items: center; gap: 7px; background: #fff; border: 1px solid #a9a9a9; border-radius: 3px; }
.url { flex: 1; font-family: "Noto Sans", "Open Sans", sans-serif; font-size: 13px; color: #7b7b7b; white-space: nowrap; }
.url b { font-weight: 400; color: #000; }
.menu { margin-left: 8px; }

.bookmarks { height: 24px; padding: 0 23px 4px 11px; display: flex; align-items: center; }
.bookmarks a { display: flex; align-items: center; color: #111; text-decoration: none; white-space: nowrap; }
.apps { width: 62px; gap: 9px; }
.login { width: 69px; gap: 8px; }
.doc { width: 25px; }
.mark { width: 150px; gap: 8px; flex: none; }
.mark svg { width: 16px; height: 16px; }
.mark span { width: 122px; -webkit-mask-image: linear-gradient(90deg, #000 78%, #0002 98%); mask-image: linear-gradient(90deg, #000 78%, #0002 98%); }
.more { margin-left: auto; }

.page { position: relative; flex: 1; padding: 20px 8px; font-family: "Liberation Serif", serif; font-size: 16px; }
.page h2 { margin: 0 0 20px; font-size: 24px; line-height: 27px; text-align: center; }
.line { height: 21px; display: flex; align-items: center; gap: 4px; }
.line a { color: #551a8b; }
.line input { width: 173px; height: 21px; padding: 1px; border: 1px solid #a9a9a9; font: 13px Roboto, sans-serif; }
.line input::placeholder { color: #757575; }

.map { position: relative; height: 300px; overflow: hidden; background: #a3ccff; font-family: Roboto, sans-serif; font-size: 11px; }
.canvas { width: 100%; height: 100%; }
.green { fill: #cae6a4; }
.yellow { fill: #f9f2da; }
.water { fill: #a3ccff; }
.stream { fill: none; stroke: #a3ccff; }
.border { fill: none; stroke: #b2b1ad; stroke-width: 3; stroke-dasharray: 15 5; }
.slow { fill: none; stroke: #f3b77e; stroke-width: 5; }
.roads { fill: none; stroke: #84ca50; stroke-width: 20; stroke-linejoin: round; }
.roads .thin { stroke-width: 12; }
.roads .fill { fill: #84ca50; stroke-width: 4; }
.labels { text-anchor: middle; stroke-linejoin: round; }
.labels text { paint-order: stroke; }
.state { font-size: 11px; font-weight: 500; letter-spacing: 1px; fill: #625f5b; stroke: #f4f3ee; stroke-width: 2; }
.city { font-size: 12px; fill: #1f1f1f; stroke: #fff; stroke-width: 2; }
.country { font-size: 18px; font-weight: 700; fill: #1f1f1f; stroke: #f8f6f2; stroke-width: 3; }
.dots { fill: #fff; stroke: #333; stroke-width: 1; }
.maptype { position: absolute; left: 10px; top: 10px; height: 29px; display: flex; background: #fff; border-radius: 2px; box-shadow: 0 1px 3px #0004; color: #565656; }
.maptype button { padding: 0 8px; }
.maptype .on { padding-right: 7px; color: #000; font-weight: 500; border-right: 1px solid #e8e8e8; }
.google { position: absolute; left: 6px; bottom: 2px; font: 500 20px/24px Lato, sans-serif; text-shadow: 0 0 2px #fff, 0 0 2px #fff, 0 0 2px #fff, 0 0 1px #fff; }
.google i { font-style: normal; }
.b { color: #4285f4; } .r { color: #ea4335; } .y { color: #fbbc05; } .g { color: #34a853; }
.full { position: absolute; right: 14px; top: 10px; width: 25px; height: 25px; background: #fff; border-radius: 1px; }
.controls { position: absolute; right: 10px; bottom: 24px; display: grid; gap: 10px; }
.peg, .zoom { width: 28px; background: #fff; border-radius: 2px; box-shadow: 0 1px 3px #0004; }
.peg { height: 28px; }
.zoom button { width: 28px; height: 27px; }
.zoom button + button { width: 20px; height: 28px; margin: 0 4px; border-top: 1px solid #e6e6e6; }
.legal { position: absolute; right: 0; bottom: 0; display: flex; height: 14px; font-size: 10px; line-height: 14px; color: #444; background: #dfe9f6; }
.legal span { padding: 0 5px; }
.legal a { padding: 0 6px 0 5px; color: #444; text-decoration: none; border-left: 1px solid #b8d5f6; }

.watermark { position: absolute; left: 1073px; bottom: 33px; color: #bdbdbd; font-family: "Open Sans", sans-serif; }
.watermark p { margin: 0; font-size: 19px; line-height: 24px; }
.watermark small { display: block; font-size: 14px; line-height: 21px; }

.taskbar { height: 40px; display: flex; background: linear-gradient(#252525 17px, #070907 17px); color: #fff; }
.start { width: 48px; background: #0d120f; }
.search { width: 344px; padding: 0 15px 0 9px; display: flex; align-items: center; gap: 5px; background: #333; }
.search input { flex: 1; min-width: 0; border: 0; padding: 0; background: none; color: #fff; font: 14px "Open Sans", sans-serif; }
.search input::placeholder { color: #a0a0a0; }
.dock { display: flex; gap: 9px; padding-left: 4px; background: linear-gradient(#0e1722, #0e1722) 0 0 / 94px 7px no-repeat; }
.dock button { width: 40px; height: 40px; border-bottom: 2px solid transparent; border-top: 2px solid transparent; }
.dock .view { margin-right: 2px; }
.dock .open { border-bottom-color: #76b9ed; }
.dock .current { width: 48px; margin: 0 -4px; background: linear-gradient(#505251 15px, #3a3b3b 15px); border-top-color: #505251; }
.tray { margin-left: auto; padding: 0 5px 0 0; display: flex; align-items: center; background: #0d100d; }
.tray > button { width: 24px; height: 40px; }
.tray > button:first-child { margin-left: -54px; }
.tray time { width: 64px; text-align: center; font-size: 12px; line-height: 18px; }
.tray .notify { position: relative; width: 48px; border-right: 1px solid #777; }
.notify b { position: absolute; right: 14px; bottom: 5px; font-size: 12px; font-weight: 400; }
```
